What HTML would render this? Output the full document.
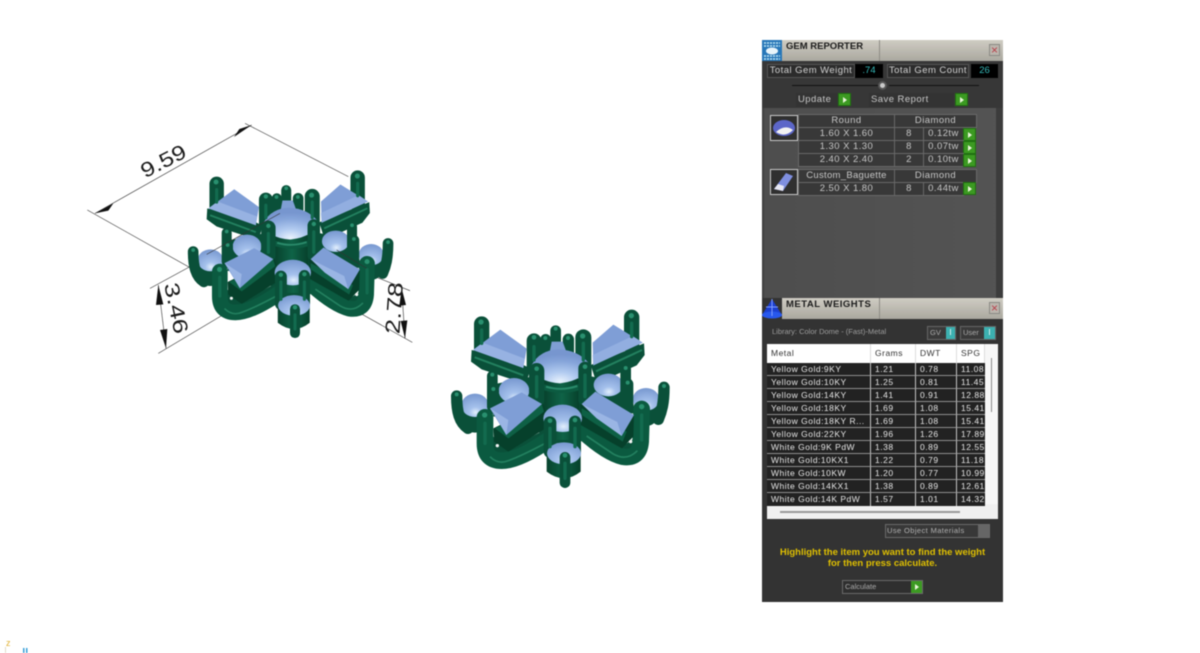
<!DOCTYPE html>
<html>
<head>
<meta charset="utf-8">
<style>
html,body{margin:0;padding:0;background:#fff;}
body{width:1200px;height:653px;overflow:hidden;position:relative;font-family:"Liberation Sans",sans-serif;}
svg.full{position:absolute;left:0;top:0;filter:blur(.5px);}
#p{position:absolute;left:762px;top:40px;width:241px;height:562px;background:#373737;overflow:hidden;filter:blur(.45px);}
#p div{position:absolute;box-sizing:border-box;white-space:nowrap;}
.tb{background:linear-gradient(#cfccc3,#aaa89f);left:0;width:241px;height:21px;}
.tt{font-weight:bold;font-size:9.5px;color:#1c1c1c;}
.x{width:11px;height:12px;background:#bbb5ad;border:1px solid #8a8a84;color:#b8404a;font-size:12px;line-height:10px;text-align:center;}
.c{background:#383838;border:1px solid #686868;color:#c6c6c6;font-size:9.5px;text-align:center;letter-spacing:.45px;line-height:12px;height:14px;}
.lb{background:#2c2c2c;border:1px solid #555;color:#d0d0d0;font-size:9.5px;letter-spacing:.45px;line-height:12px;text-align:center;height:14px;}
.v{background:#000;color:#35b8b8;font-size:9.5px;text-align:center;line-height:13px;height:14px;}
.g{background:#3c9a22;width:13px;height:13px;border:1px solid #1f6f10;}
.g:after{content:"";position:absolute;left:4px;top:2.5px;border-left:4px solid #e8f5d8;border-top:3px solid transparent;border-bottom:3px solid transparent;}
.btn{background:#333;color:#c8c8c8;font-size:9.5px;letter-spacing:.45px;line-height:13px;height:14px;padding-left:2px;}
.ic{background:#303030;border:1px solid #c8c8c8;}
.tc{color:#e6e6e6;font-size:8.5px;letter-spacing:.5px;line-height:12px;height:13px;background:#222;border-right:1px solid #c4c4c4;border-bottom:1px solid #8e8e8e;padding-left:4px;overflow:hidden;}
.th{color:#333;background:#fff;font-size:8.5px;letter-spacing:.5px;line-height:19px;height:19px;padding-left:4px;border-right:1px solid #ddd;}
</style>
</head>
<body>
<svg class="full" width="1200" height="653" viewBox="0 0 1200 653" xmlns="http://www.w3.org/2000/svg">
<defs>
<linearGradient id="gt" x1="0" x2="1" y1="0" y2="0"><stop offset="0" stop-color="#07422d"/><stop offset=".5" stop-color="#0f6347"/><stop offset="1" stop-color="#06402b"/></linearGradient>
<radialGradient id="dome" cx=".52" cy=".8" r=".75"><stop offset="0" stop-color="#e2effc"/><stop offset=".3" stop-color="#a5c1ec"/><stop offset="1" stop-color="#7b9bd2"/></radialGradient>
<radialGradient id="cdome" cx=".5" cy=".95" r=".8"><stop offset="0" stop-color="#eaf3fd"/><stop offset=".35" stop-color="#b2cbf0"/><stop offset=".75" stop-color="#86a5da"/><stop offset="1" stop-color="#7796cf"/></radialGradient>
<g id="m">
 <!-- back prongs -->
 <g stroke-linecap="round" fill="none" stroke="#0a5039">
  <path d="M125 72V160" stroke-width="46"/>
  <path d="M575 52V140" stroke-width="46"/>
  <path d="M347 92V145" stroke-width="32"/>
  <path d="M317 118V175" stroke-width="32"/>
  <path d="M385 118V175" stroke-width="34"/>
  <path d="M282 122V200" stroke-width="44"/>
  <path d="M430 112V200" stroke-width="48"/>
 </g>
 <polygon points="335,125 368,125 378,152 330,152" fill="#7f9fd4"/>
 <!-- back masses -->
 <polygon points="150,255 300,225 320,340 160,350" fill="#0a5039"/>
 <polygon points="570,250 430,225 415,340 585,340" fill="#0a5039"/>
 <!-- back arms -->
 <polygon points="95,150 93,185 125,208 258,252 272,205 250,195" fill="#0a5039"/>
 <path d="M104 172L250 226" stroke="#23805f" stroke-width="6" fill="none"/>
 <polygon points="612,130 614,165 590,196 470,250 452,195" fill="#0a5039"/>
 <path d="M606 150L468 214" stroke="#23805f" stroke-width="6" fill="none"/>
 <!-- back baguettes -->
 <polygon points="99,150 181,89 260,146 250,204" fill="#7f9ed6"/>
 <polygon points="99,150 128,128 254,176 250,204" fill="#97b2e2"/>
 <polygon points="458,128 520,74 608,128 460,196" fill="#7f9ed6"/>
 <polygon points="608,128 460,196 458,165 578,108" fill="#92aee0"/>
 <!-- mid stones -->
 <ellipse cx="222" cy="272" rx="46" ry="38" fill="url(#dome)"/>
 <ellipse cx="505" cy="255" rx="44" ry="34" fill="url(#dome)"/>
 <!-- far stones -->
 <ellipse cx="105" cy="350" rx="42" ry="48" fill="#0a5039"/>
 <ellipse cx="105" cy="316" rx="41" ry="35" fill="url(#dome)"/>
 <ellipse cx="620" cy="330" rx="40" ry="48" fill="#0a5039"/>
 <ellipse cx="618" cy="298" rx="40" ry="34" fill="url(#dome)"/>
 <g stroke-linecap="round" fill="none" stroke="#0a5039">
  <path d="M50 288C50 335 58 368 84 385" stroke-width="34"/>
  <path d="M672 262C672 310 665 335 655 358" stroke-width="34"/>
  <path d="M157 228V320" stroke-width="32"/>
  <path d="M160 272V325" stroke-width="34"/>
  <path d="M557 208V300" stroke-width="32"/>
  <path d="M563 252V305" stroke-width="34"/>
 </g>
 <!-- center body -->
 <polygon points="296,300 436,300 440,395 420,430 320,430 296,395" fill="#0a5039"/>
 <rect x="312" y="235" width="106" height="110" fill="url(#gt)"/>
 <path d="M298 248Q365 275 432 246L432 266Q365 292 298 266Z" fill="#0c5b41"/>
 <path d="M318 260Q365 274 412 258" stroke="#2a8a6a" stroke-width="6" fill="none"/>
 <!-- center dome -->
 <path d="M275 195Q300 150 355 148Q415 150 447 190Q440 240 360 250Q285 245 275 195Z" fill="url(#cdome)"/>
 <g stroke-linecap="round" fill="none" stroke="#0a5039">
  <path d="M290 212V300" stroke-width="46"/>
  <path d="M435 205V300" stroke-width="40"/>
 </g>
 <!-- front arms and blocks -->
 <polygon points="150,400 200,450 322,385 322,432 200,478 150,462" fill="#0a5039"/>
 <polygon points="592,410 545,440 430,370 430,405 545,472 592,452" fill="#0a5039"/>
 <path d="M135 352L135 430Q135 482 185 482Q235 482 325 420" fill="none" stroke="#0b5a40" stroke-width="50" stroke-linecap="round"/>
 <path d="M150 470Q175 495 205 482Q245 468 325 425" fill="none" stroke="#23805f" stroke-width="5"/>
 <path d="M605 327L602 425Q598 478 548 470Q500 458 430 395" fill="none" stroke="#0b5a40" stroke-width="50" stroke-linecap="round"/>
 <path d="M592 452Q560 485 520 462Q490 442 440 408" fill="none" stroke="#23805f" stroke-width="5"/>
 <polygon points="160,385 162,425 205,455 325,380 310,310" fill="#06402b"/>
 <polygon points="165,385 205,415 312,335 305,312" fill="#0e6045"/>
 <polygon points="420,312 422,375 546,445 580,410 582,345" fill="#06402b"/>
 <polygon points="425,325 425,345 548,425 560,395" fill="#0e6045"/>
 <circle cx="172" cy="437" r="5" fill="#f4f4f4"/>
 <circle cx="572" cy="425" r="5" fill="#f4f4f4"/>
 <!-- front baguettes -->
 <polygon points="150,325 245,277 306,312 199,405" fill="#7f9ed6"/>
 <polygon points="150,325 165,345 199,405 205,360" fill="#9ab5e4"/>
 <polygon points="425,312 466,275 582,345 545,408" fill="#7f9ed6"/>
 <polygon points="425,312 532,366 545,408 470,355" fill="#9ab5e4"/>
 <!-- front stone -->
 <rect x="318" y="360" width="104" height="60" fill="url(#gt)"/>
 <ellipse cx="368" cy="355" rx="58" ry="41" fill="url(#dome)"/>
 <g stroke-linecap="round" fill="none" stroke="#0a5039">
  <path d="M330 368V455" stroke-width="38"/>
  <path d="M405 365V455" stroke-width="36"/>
 </g>
 <!-- bottom stone -->
 <path d="M320 460V515Q372 555 422 515V460Z" fill="url(#gt)"/>
 <ellipse cx="372" cy="460" rx="51" ry="33" fill="url(#dome)"/>
 <path d="M375 472V548" stroke="#0a5039" stroke-width="32" stroke-linecap="round" fill="none"/>
 <!-- prong shading -->
 <g stroke="#136b4f" stroke-width="10" fill="none" stroke-linecap="round">
  <path d="M125 90V130M575 70V110M282 140V180M430 130V180M290 230V290M435 225V290M135 370V430M605 345V420M330 385V440M405 385V440M375 490V535"/>
 </g>
 <!-- prong tips -->
 <g fill="#29906f">
  <circle cx="123" cy="66" r="8"/><circle cx="574" cy="47" r="8"/><circle cx="347" cy="86" r="6"/>
  <circle cx="316" cy="114" r="6"/><circle cx="384" cy="114" r="6"/><circle cx="282" cy="112" r="7"/>
  <circle cx="428" cy="108" r="8"/><circle cx="50" cy="283" r="6"/><circle cx="672" cy="258" r="6"/>
  <circle cx="157" cy="224" r="6"/><circle cx="160" cy="267" r="6"/><circle cx="557" cy="204" r="6"/>
  <circle cx="563" cy="248" r="6"/><circle cx="290" cy="206" r="7"/><circle cx="435" cy="200" r="7"/>
  <circle cx="134" cy="345" r="8"/><circle cx="605" cy="320" r="8"/><circle cx="330" cy="362" r="7"/>
  <circle cx="405" cy="360" r="7"/><circle cx="375" cy="466" r="7"/>
 </g>
</g>
</defs>

<g transform="translate(440 300) scale(.33333)"><use href="#m"/></g>

<!-- dimensions (zoom4 coords) -->
<g transform="translate(80 115) scale(.33333)">
 <g stroke="#333" stroke-width="1.8" fill="none">
  <path d="M22 285L330 458"/>
  <path d="M495 25L805 185"/>
  <path d="M45 295L515 30"/>
  <path d="M210 520L330 455"/>
  <path d="M235 715L445 590"/>
  <path d="M235 510L258 700"/>
  <path d="M805 575L997 682"/>
  <path d="M860 475L990 527"/>
  <path d="M965 520L975 670"/>
 </g>
</g>
<g transform="translate(80 115) scale(.33333) translate(292.5 139) scale(.94)"><use href="#m"/></g>
<g transform="translate(80 115) scale(.33333)">
 <g stroke="#333" stroke-width="1.8" fill="none">
  <path d="M380 418L600 295"/>
  <path d="M770 405L860 460"/>
 </g>
 <g fill="#111">
  <polygon points="45,295 100,265 85,287"/>
  <polygon points="515,30 462,66 478,42"/>
  <polygon points="235,510 250,568 228,570"/>
  <polygon points="258,700 240,645 262,642"/>
  <polygon points="965,520 978,570 958,572"/>
  <polygon points="975,670 962,618 982,616"/>
 </g>
 <g font-family="Liberation Sans, sans-serif" font-size="62" fill="#1c1c1c">
  <text transform="translate(195 190) rotate(-27)" textLength="145" lengthAdjust="spacingAndGlyphs">9.59</text>
  <text transform="translate(252 508) rotate(78)" textLength="155" lengthAdjust="spacingAndGlyphs">3.46</text>
  <text transform="translate(958 658) rotate(-86)" textLength="155" lengthAdjust="spacingAndGlyphs">2.78</text>
 </g>
</g>
<!-- corner axis -->
<text x="6" y="646" font-family="Liberation Sans, sans-serif" font-size="9" fill="#e0b030">z</text>
<rect x="5" y="647" width="1" height="6" fill="#e2dcc8"/>
<rect x="23" y="648" width="1.5" height="5" fill="#3aa0d8"/>
<rect x="26" y="648" width="1.5" height="5" fill="#3aa0d8"/>
</svg>

<div id="p">
 <!-- GEM REPORTER -->
 <div class="tb" style="top:0;"></div>
 <div style="left:117px;top:0;width:1px;height:21px;background:#8e8c85;"></div>
 <div style="left:0;top:0;width:20px;height:21px;background:#2877b8;">
  <svg width="20" height="21" viewBox="0 0 20 21" style="display:block"><path d="M2 3H18M2 6H18M2 16H18M2 19H18" stroke="#bfe6f5" stroke-width="1.4" stroke-dasharray="2 1"/><ellipse cx="10" cy="11" rx="6" ry="3.5" fill="#e8f4fa"/></svg>
 </div>
 <div class="tt" style="left:24px;top:1px;">GEM REPORTER</div>
 <div class="x" style="left:227px;top:4px;">×</div>

 <div class="lb" style="left:5px;top:24px;width:88px;">Total Gem Weight</div>
 <div class="v" style="left:93px;top:24px;width:28px;">.74</div>
 <div class="lb" style="left:125px;top:24px;width:82px;">Total Gem Count</div>
 <div class="v" style="left:209px;top:24px;width:27px;">26</div>
 <div style="left:30px;top:45px;width:90px;height:1px;background:#111;"></div>
 <div style="left:127px;top:45px;width:90px;height:1px;background:#111;"></div>
 <div style="left:116px;top:41px;width:9px;height:9px;border-radius:50%;background:#c9c9c9;border:2px solid #555;"></div>
 <div class="btn" style="left:34px;top:53px;width:42px;">Update</div>
 <div class="g" style="left:76px;top:53px;"></div>
 <div class="btn" style="left:107px;top:53px;width:85px;">Save Report</div>
 <div class="g" style="left:193px;top:53px;"></div>

 <div style="left:0;top:68px;width:241px;height:231px;background:linear-gradient(90deg,#3a3a3a 0,#4e4e4e 3px,#545454 100%);"></div>
 <div style="left:234px;top:68px;width:7px;height:231px;background:#3c3c3c;"></div>

 <div class="ic" style="left:8px;top:75px;width:28px;height:26px;">
  <svg width="26" height="24" viewBox="0 0 26 24" style="display:block"><ellipse cx="13" cy="12" rx="11" ry="8" fill="#5c66c8"/><path d="M5 16Q14 8 22 14Q14 22 5 16Z" fill="#f2f2f2"/></svg>
 </div>
 <div class="c" style="left:36px;top:74px;width:97px;">Round</div>
 <div class="c" style="left:132px;top:74px;width:83px;">Diamond</div>
 <div class="c" style="left:36px;top:87px;width:97px;">1.60 X 1.60</div>
 <div class="c" style="left:132px;top:87px;width:30px;">8</div>
 <div class="c" style="left:161px;top:87px;width:41px;">0.12tw</div>
 <div class="g" style="left:201px;top:88px;"></div>
 <div class="c" style="left:36px;top:100px;width:97px;">1.30 X 1.30</div>
 <div class="c" style="left:132px;top:100px;width:30px;">8</div>
 <div class="c" style="left:161px;top:100px;width:41px;">0.07tw</div>
 <div class="g" style="left:201px;top:101px;"></div>
 <div class="c" style="left:36px;top:113px;width:97px;">2.40 X 2.40</div>
 <div class="c" style="left:132px;top:113px;width:30px;">2</div>
 <div class="c" style="left:161px;top:113px;width:41px;">0.10tw</div>
 <div class="g" style="left:201px;top:114px;"></div>

 <div class="ic" style="left:8px;top:129px;width:28px;height:26px;">
  <svg width="26" height="24" viewBox="0 0 26 24" style="display:block"><polygon points="15,3 22,6 12,21 3,19" fill="#7f8fe0"/><polygon points="3,19 12,21 13,16 7,14" fill="#e8e8f4"/></svg>
 </div>
 <div class="c" style="left:36px;top:129px;width:97px;letter-spacing:.3px;">Custom_Baguette</div>
 <div class="c" style="left:132px;top:129px;width:83px;">Diamond</div>
 <div class="c" style="left:36px;top:142px;width:97px;">2.50 X 1.80</div>
 <div class="c" style="left:132px;top:142px;width:30px;">8</div>
 <div class="c" style="left:161px;top:142px;width:41px;">0.44tw</div>
 <div class="g" style="left:201px;top:142px;"></div>

 <!-- METAL WEIGHTS -->
 <div class="tb" style="top:258px;"></div>
 <div style="left:0;top:279px;width:241px;height:283px;background:#333;"></div>
 <div style="left:117px;top:258px;width:1px;height:21px;background:#8e8c85;"></div>
 <div style="left:0;top:258px;width:20px;height:21px;background:#333;">
  <svg width="20" height="21" viewBox="0 0 20 21" style="display:block"><polygon points="10,1 20,17 0,17" fill="#1c3fd0"/><ellipse cx="10" cy="17" rx="10" ry="3.5" fill="#2858ec"/><path d="M4 9H16M10 1V18" stroke="#7f9cff"/></svg>
 </div>
 <div class="tt" style="left:24px;top:259px;letter-spacing:.5px;">METAL WEIGHTS</div>
 <div class="x" style="left:227px;top:262px;">×</div>
 <div style="left:10px;top:287px;color:#9c9c9c;font-size:7.5px;line-height:10px;">Library: Color Dome - (Fast)-Metal</div>
 <div style="left:165px;top:286px;width:29px;height:14px;background:#3a3a3a;border:1px solid #666;color:#aaa;font-size:7.5px;line-height:12px;padding-left:2px;">GV</div>
 <div style="left:184px;top:287px;width:9px;height:12px;background:#3cb0b0;color:#fff;font-size:8px;line-height:12px;text-align:center;">I</div>
 <div style="left:198px;top:286px;width:36px;height:14px;background:#3a3a3a;border:1px solid #666;color:#aaa;font-size:7.5px;line-height:12px;padding-left:2px;">User</div>
 <div style="left:222px;top:287px;width:11px;height:12px;background:#3cb0b0;color:#fff;font-size:8px;line-height:12px;text-align:center;">I</div>

 <div style="left:5px;top:304px;width:231px;height:175px;background:#f0f0f0;"></div>
 <div style="left:223px;top:304px;width:13px;height:160px;background:#f7f7f7;"></div>
 <div style="left:229px;top:318px;width:1px;height:54px;background:#8a8a8a;"></div>
 <div style="left:18px;top:471px;width:180px;height:2px;background:#999;"></div>

 <div class="th" style="left:5px;top:304px;width:104px;">Metal</div>
 <div class="th" style="left:109px;top:304px;width:45px;">Grams</div>
 <div class="th" style="left:154px;top:304px;width:41px;">DWT</div>
 <div class="th" style="left:195px;top:304px;width:28px;">SPG</div>

 <div class="tc" style="left:5px;top:323px;width:104px;">Yellow Gold:9KY</div><div class="tc" style="left:109px;top:323px;width:45px;">1.21</div><div class="tc" style="left:154px;top:323px;width:41px;">0.78</div><div class="tc" style="left:195px;top:323px;width:28px;border-right:0;">11.08</div>
 <div class="tc" style="left:5px;top:336px;width:104px;">Yellow Gold:10KY</div><div class="tc" style="left:109px;top:336px;width:45px;">1.25</div><div class="tc" style="left:154px;top:336px;width:41px;">0.81</div><div class="tc" style="left:195px;top:336px;width:28px;border-right:0;">11.45</div>
 <div class="tc" style="left:5px;top:349px;width:104px;">Yellow Gold:14KY</div><div class="tc" style="left:109px;top:349px;width:45px;">1.41</div><div class="tc" style="left:154px;top:349px;width:41px;">0.91</div><div class="tc" style="left:195px;top:349px;width:28px;border-right:0;">12.88</div>
 <div class="tc" style="left:5px;top:362px;width:104px;">Yellow Gold:18KY</div><div class="tc" style="left:109px;top:362px;width:45px;">1.69</div><div class="tc" style="left:154px;top:362px;width:41px;">1.08</div><div class="tc" style="left:195px;top:362px;width:28px;border-right:0;">15.41</div>
 <div class="tc" style="left:5px;top:375px;width:104px;">Yellow Gold:18KY R...</div><div class="tc" style="left:109px;top:375px;width:45px;">1.69</div><div class="tc" style="left:154px;top:375px;width:41px;">1.08</div><div class="tc" style="left:195px;top:375px;width:28px;border-right:0;">15.41</div>
 <div class="tc" style="left:5px;top:388px;width:104px;">Yellow Gold:22KY</div><div class="tc" style="left:109px;top:388px;width:45px;">1.96</div><div class="tc" style="left:154px;top:388px;width:41px;">1.26</div><div class="tc" style="left:195px;top:388px;width:28px;border-right:0;">17.89</div>
 <div class="tc" style="left:5px;top:401px;width:104px;">White Gold:9K PdW</div><div class="tc" style="left:109px;top:401px;width:45px;">1.38</div><div class="tc" style="left:154px;top:401px;width:41px;">0.89</div><div class="tc" style="left:195px;top:401px;width:28px;border-right:0;">12.55</div>
 <div class="tc" style="left:5px;top:414px;width:104px;">White Gold:10KX1</div><div class="tc" style="left:109px;top:414px;width:45px;">1.22</div><div class="tc" style="left:154px;top:414px;width:41px;">0.79</div><div class="tc" style="left:195px;top:414px;width:28px;border-right:0;">11.18</div>
 <div class="tc" style="left:5px;top:427px;width:104px;">White Gold:10KW</div><div class="tc" style="left:109px;top:427px;width:45px;">1.20</div><div class="tc" style="left:154px;top:427px;width:41px;">0.77</div><div class="tc" style="left:195px;top:427px;width:28px;border-right:0;">10.99</div>
 <div class="tc" style="left:5px;top:440px;width:104px;">White Gold:14KX1</div><div class="tc" style="left:109px;top:440px;width:45px;">1.38</div><div class="tc" style="left:154px;top:440px;width:41px;">0.89</div><div class="tc" style="left:195px;top:440px;width:28px;border-right:0;">12.61</div>
 <div class="tc" style="left:5px;top:453px;width:104px;border-bottom:0;">White Gold:14K PdW</div><div class="tc" style="left:109px;top:453px;width:45px;border-bottom:0;">1.57</div><div class="tc" style="left:154px;top:453px;width:41px;border-bottom:0;">1.01</div><div class="tc" style="left:195px;top:453px;width:28px;border:0;">14.32</div>

 <div style="left:123px;top:484px;width:105px;height:14px;background:#383838;border:1px solid #6a6a6a;color:#b0b0b0;font-size:7.5px;letter-spacing:.4px;line-height:12px;padding-left:1px;">Use Object Materials</div>
 <div style="left:216px;top:485px;width:11px;height:12px;background:#666;"></div>
 <div style="left:0;top:507px;width:241px;text-align:center;color:#e0c000;font-weight:bold;font-size:9.5px;line-height:11px;white-space:normal;">Highlight the item you want to find the weight<br>for then press calculate.</div>
 <div style="left:80px;top:540px;width:81px;height:14px;background:#2f2f2f;border:1px solid #6a6a6a;color:#aaa;font-size:7.5px;line-height:12px;padding-left:2px;">Calculate</div>
 <div class="g" style="left:149px;top:541px;width:11px;height:12px;border:0;"></div>
</div>
</body>
</html>
